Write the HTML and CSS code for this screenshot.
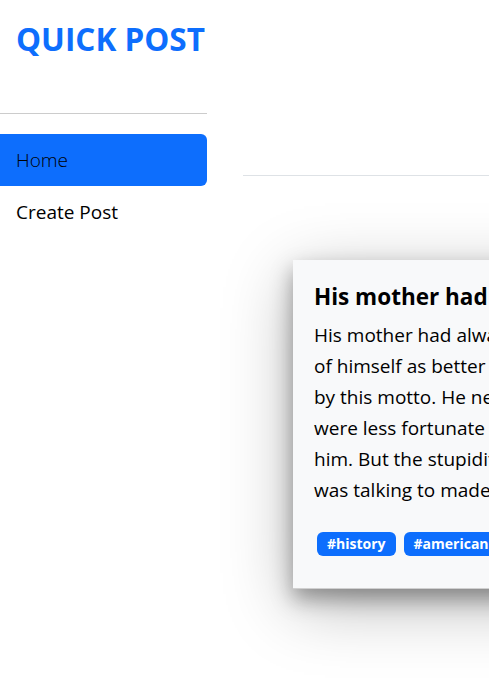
FILE: index.html
```html
<!DOCTYPE html>
<html lang="en">
<head>
<meta charset="utf-8">
<title>Quick Post</title>
<link rel="stylesheet" href="styles.css">
</head>
<body>
<div class="app">
  <aside class="sidebar">
    <h1 class="brand">QUICK POST</h1>
    <hr class="side-rule">
    <nav class="nav">
      <a class="nav-link active" href="#">Home</a>
      <a class="nav-link" href="#">Create Post</a>
    </nav>
  </aside>
  <main class="main">
    <div class="topbar"></div>
    <div class="posts">
      <article class="card">
        <h5 class="card-title">His mother had always taught him</h5>
        <p class="card-text"><span class="line">His mother had always taught him not to ever think</span> <span class="line">of himself as better than others. He'd tried to live</span> <span class="line">by this motto. He never looked down on those who</span> <span class="line">were less fortunate or who had less money than</span> <span class="line">him. But the stupidity of the group of people he</span> <span class="line">was talking to made him change his mind.</span></p>
        <div class="tags">
          <span class="badge">#history</span>
          <span class="badge">#american</span>
          <span class="badge">#crime</span>
        </div>
      </article>
    </div>
  </main>
</div>
</body>
</html>
```
FILE: styles.css
```css
html {
  overflow: hidden;
}
body {
  margin: 0;
  min-height: 100vh;
  background: #fff;
  font-family: "Open Sans", "Noto Sans", sans-serif;
  color: #212529;
}
.app {
  display: flex;
  width: 1000px;
}
.sidebar {
  width: 207px;
  flex-shrink: 0;
}
.brand {
  margin: 0;
  padding: 19px 0 0 16px;
  height: 94px;
  box-sizing: border-box;
  font-size: 31.5px;
  font-weight: 700;
  color: #0d6efd;
  line-height: 40px;
}
.side-rule {
  margin: 19px 0 20px;
  border: 0;
  border-top: 1px solid #ccc;
}
.nav {
  display: flex;
  flex-direction: column;
}
.nav-link {
  display: block;
  padding: 13px 16px;
  line-height: 26px;
  font-size: 19px;
  font-weight: 400;
  color: #000;
  text-decoration: none;
  border-radius: 0 6px 6px 0;
}
.nav-link.active {
  background: #0d6efd;
  font-weight: 300;
}
.main {
  flex: 1;
  margin-left: 36px;
}
.topbar {
  height: 175px;
  border-bottom: 1px solid #dee2e6;
}
.posts {
  padding: 84px 0 120px 50px;
}
.card {
  width: 560px;
  background: #f8f9fa;
  box-shadow: 0 10px 20px rgba(0, 0, 0, 0.35), 0 16px 64px rgba(0, 0, 0, 0.28);
  border-bottom: 1px solid #d0d0d0;
  padding: 22px 21px 32px;
}
.card-title {
  margin: 0 0 8px;
  font-size: 22.5px;
  font-weight: 700;
  line-height: 30px;
  color: #000;
}
.card-text {
  margin: 0 0 26px;
  font-size: 19px;
  line-height: 31px;
  color: #000;
}
.line {
  display: block;
  white-space: nowrap;
}
.tags {
  display: flex;
  gap: 8px;
  padding-left: 3px;
}
.badge {
  background: #0d6efd;
  color: #fff;
  font-weight: 700;
  font-size: 14px;
  line-height: 16px;
  padding: 4px 10px;
  border-radius: 6px;
}
```
